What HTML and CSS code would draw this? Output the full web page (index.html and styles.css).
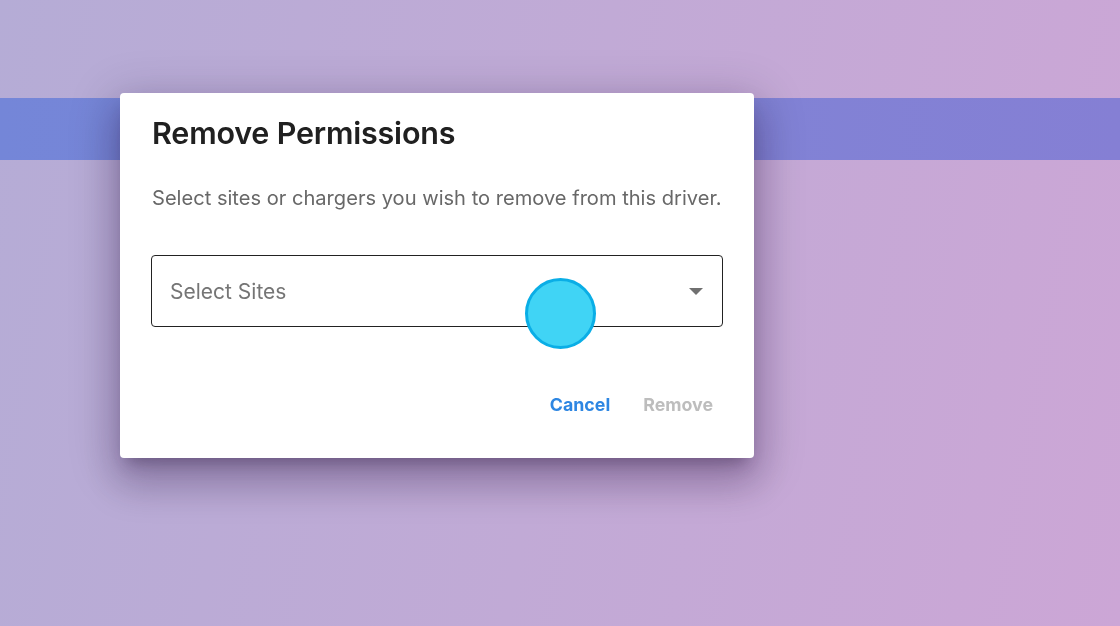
FILE: index.html
```html
<!DOCTYPE html>
<html>
<head>
<meta charset="utf-8">
<link rel="stylesheet" href="styles.css">
</head>
<body>
<div class="page">
  <div class="band"></div>
</div>
<div class="overlay">
  <div class="dialog">
    <h2 class="title">Remove Permissions</h2>
    <p class="subtitle">Select sites or chargers you wish to remove from this driver.</p>
    <div class="select">
      <span class="placeholder">Select Sites</span>
      <svg class="arrow" width="14" height="7" viewBox="0 0 14 7"><path d="M0 0 L14 0 L7 7 Z" fill="#707070"/></svg>
    </div>
    <div class="actions">
      <button class="btn btn-cancel">Cancel</button>
      <button class="btn btn-remove">Remove</button>
    </div>
  </div>
  <div class="cursor"></div>
</div>
</body>
</html>
```

FILE: styles.css
```css
html, body {
  margin: 0;
  padding: 0;
  width: 1120px;
  height: 626px;
  overflow: hidden;
}
body {
  font-family: "Inter", "Open Sans", sans-serif;
  background: linear-gradient(100deg, #b5acd6 0%, #c1aad6 50%, #cca6d6 100%);
}
.page {
  padding-top: 98px;
}
.band {
  height: 62px;
  background: linear-gradient(90deg, #7486d8 0%, #7f84d6 50%, #857fd4 100%);
}
.overlay {
  position: fixed;
  inset: 0;
}
.dialog {
  position: absolute;
  left: 120px;
  top: 93px;
  width: 634px;
  height: 365px;
  box-sizing: border-box;
  background: #fff;
  border-radius: 4px;
  padding: 24px 31px 0 31px;
  box-shadow: 0 11px 15px -7px rgba(40,20,60,0.35), 0 24px 38px 3px rgba(40,20,60,0.22), 0 9px 46px 8px rgba(40,20,60,0.18);
  display: flex;
  flex-direction: column;
}
.title {
  margin: 0;
  font-size: 30.5px;
  line-height: 32px;
  font-weight: 600;
  color: #202020;
  letter-spacing: -0.2px;
  padding-left: 1px;
}
.subtitle {
  margin: 37px 0 0 0;
  font-size: 20.1px;
  line-height: 24px;
  color: #686868;
  padding-left: 1px;
}
.select {
  margin-top: 45px;
  height: 72px;
  box-sizing: border-box;
  border: 1px solid #222;
  border-radius: 4px;
  display: flex;
  align-items: center;
  padding: 0 19px 0 18px;
}
.placeholder {
  flex: 1;
  font-size: 21px;
  color: #757575;
}
.arrow {
  display: block;
}
.actions {
  margin-top: 61px;
  display: flex;
  justify-content: flex-end;
  gap: 13px;
}
.btn {
  border: none;
  background: none;
  font-family: inherit;
  font-size: 17.8px;
  font-weight: 700;
  padding: 6px 10px;
  cursor: pointer;
}
.btn-cancel {
  color: #2d86e2;
}
.btn-remove {
  color: #bdbdbd;
}
.cursor {
  position: absolute;
  left: 525px;
  top: 278px;
  width: 71px;
  height: 71px;
  box-sizing: border-box;
  border-radius: 50%;
  background: #40d4f5;
  border: 3px solid #0aaee6;
}
```
